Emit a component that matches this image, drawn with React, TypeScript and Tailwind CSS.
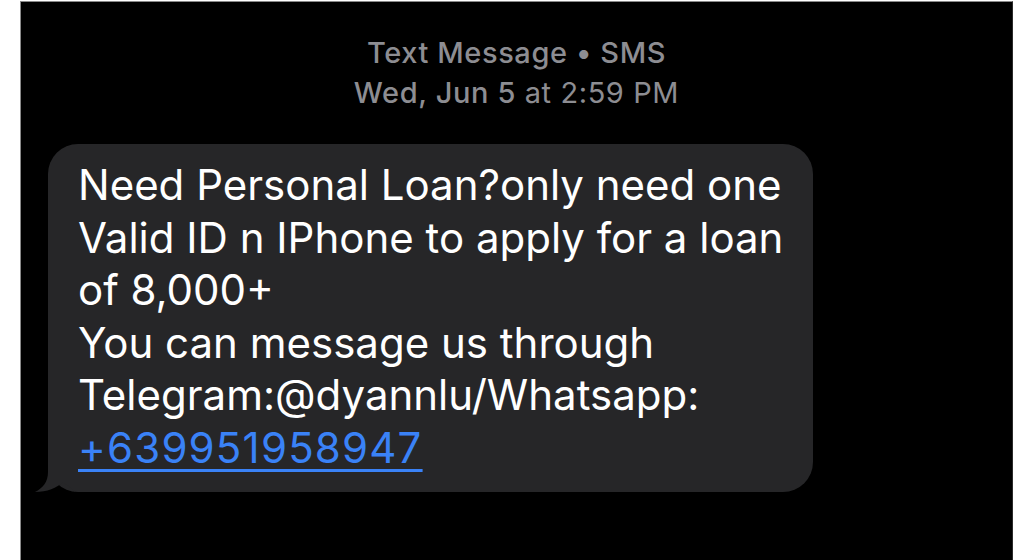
export default function App() {
  return (
    <div className="w-[1024px] h-[560px] bg-white pl-[20px] pr-[11px] pt-[1px] overflow-hidden">
      <div className="h-full bg-black border-l border-t border-r border-l-[#8a8a8a] border-t-[#8a8a8a] border-r-[#2a2a2a] font-['Inter',sans-serif]">
        {/* Header */}
        <div className="pt-[31px] text-center text-[#8d8d92] text-[29px] leading-[40px] tracking-[0.6px]">
          <div className="font-medium">Text Message • SMS</div>
          <div>
            <span className="font-medium">Wed, Jun 5</span> at 2:59 PM
          </div>
        </div>

        {/* Bubble */}
        <div className="mt-[31px] pl-[27px]">
          <div className="relative w-[765px] rounded-[30px] bg-[#262628] pl-[30px] pr-[20px] pt-[15px] pb-[18px] text-white text-[42px] leading-[52.5px]">
            <p>
              Need Personal Loan?only need one Valid ID n IPhone to apply for a loan of 8,000+
              <br />
              You can message us through Telegram:@dyannlu/Whatsapp:
              <br />
              <span className="text-[#3a82f7] underline decoration-[3px] underline-offset-[6px] tracking-[1.2px]">+639951958947</span>
            </p>
            <svg
              className="absolute left-[-13px] bottom-0"
              width="40"
              height="50"
              viewBox="0 0 40 50"
            >
              <path
                d="M13 0 L13 30 C13 40 8 46 0 50 C12 50 22 46 28 40 C33 44 38 47 40 50 L40 0 Z"
                fill="#262628"
              />
            </svg>
          </div>
        </div>
      </div>
    </div>
  );
}
